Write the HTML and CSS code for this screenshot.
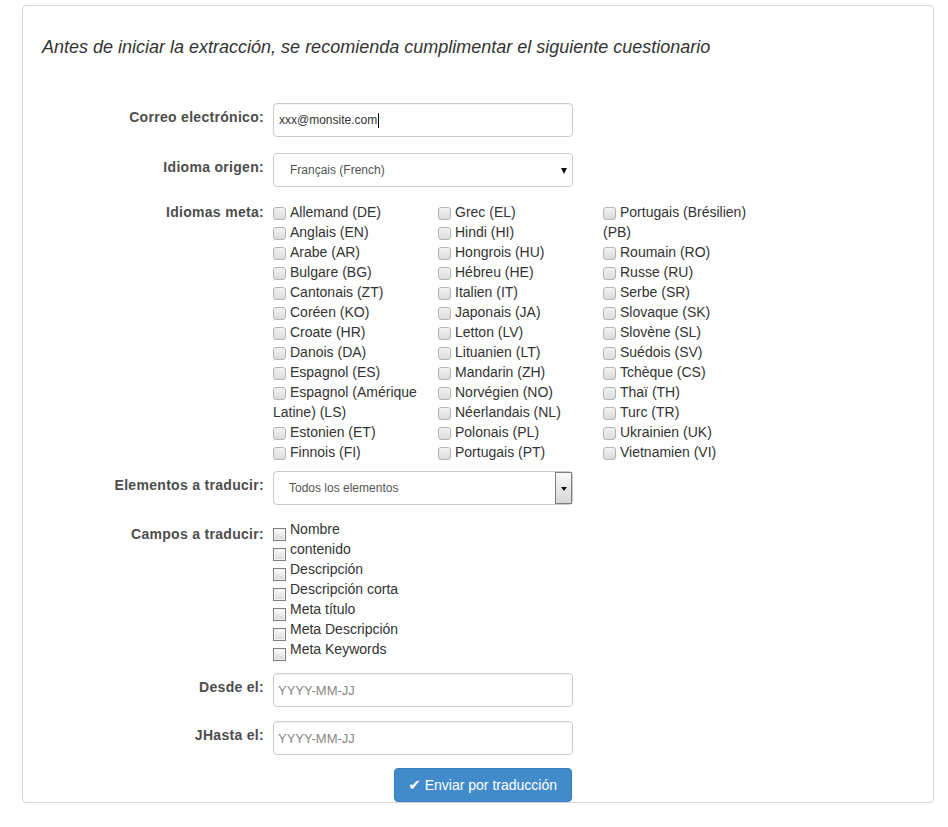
FILE: index.html
```html
<!DOCTYPE html>
<html lang="es">
<head>
<meta charset="utf-8">
<title>Cuestionario</title>
<link rel="stylesheet" href="styles.css">
</head>
<body>
<div class="panel">
  <h4 class="intro">Antes de iniciar la extracción, se recomienda cumplimentar el siguiente cuestionario</h4>
  <form class="form">
    <div class="row row-email">
      <label class="lbl">Correo electrónico:</label>
      <div class="ctrl">
        <div class="field field-text"><span class="val">xxx@monsite.com</span><span class="caret"></span></div>
      </div>
    </div>

    <div class="row row-origin">
      <label class="lbl">Idioma origen:</label>
      <div class="ctrl">
        <div class="field field-select"><span class="sel-val">Français (French)</span><span class="arrow"></span></div>
      </div>
    </div>

    <div class="row row-langs">
      <label class="lbl lbl-flat">Idiomas meta:</label>
      <div class="ctrl langs">
        <div class="lang-col">
          <div class="lang"><input type="checkbox" class="cb-round">Allemand (DE)</div>
          <div class="lang"><input type="checkbox" class="cb-round">Anglais (EN)</div>
          <div class="lang"><input type="checkbox" class="cb-round">Arabe (AR)</div>
          <div class="lang"><input type="checkbox" class="cb-round">Bulgare (BG)</div>
          <div class="lang"><input type="checkbox" class="cb-round">Cantonais (ZT)</div>
          <div class="lang"><input type="checkbox" class="cb-round">Coréen (KO)</div>
          <div class="lang"><input type="checkbox" class="cb-round">Croate (HR)</div>
          <div class="lang"><input type="checkbox" class="cb-round">Danois (DA)</div>
          <div class="lang"><input type="checkbox" class="cb-round">Espagnol (ES)</div>
          <div class="lang"><input type="checkbox" class="cb-round">Espagnol (Amérique Latine) (LS)</div>
          <div class="lang"><input type="checkbox" class="cb-round">Estonien (ET)</div>
          <div class="lang"><input type="checkbox" class="cb-round">Finnois (FI)</div>
        </div>
        <div class="lang-col">
          <div class="lang"><input type="checkbox" class="cb-round">Grec (EL)</div>
          <div class="lang"><input type="checkbox" class="cb-round">Hindi (HI)</div>
          <div class="lang"><input type="checkbox" class="cb-round">Hongrois (HU)</div>
          <div class="lang"><input type="checkbox" class="cb-round">Hébreu (HE)</div>
          <div class="lang"><input type="checkbox" class="cb-round">Italien (IT)</div>
          <div class="lang"><input type="checkbox" class="cb-round">Japonais (JA)</div>
          <div class="lang"><input type="checkbox" class="cb-round">Letton (LV)</div>
          <div class="lang"><input type="checkbox" class="cb-round">Lituanien (LT)</div>
          <div class="lang"><input type="checkbox" class="cb-round">Mandarin (ZH)</div>
          <div class="lang"><input type="checkbox" class="cb-round">Norvégien (NO)</div>
          <div class="lang"><input type="checkbox" class="cb-round">Néerlandais (NL)</div>
          <div class="lang"><input type="checkbox" class="cb-round">Polonais (PL)</div>
          <div class="lang"><input type="checkbox" class="cb-round">Portugais (PT)</div>
        </div>
        <div class="lang-col">
          <div class="lang"><input type="checkbox" class="cb-round">Portugais (Brésilien) (PB)</div>
          <div class="lang"><input type="checkbox" class="cb-round">Roumain (RO)</div>
          <div class="lang"><input type="checkbox" class="cb-round">Russe (RU)</div>
          <div class="lang"><input type="checkbox" class="cb-round">Serbe (SR)</div>
          <div class="lang"><input type="checkbox" class="cb-round">Slovaque (SK)</div>
          <div class="lang"><input type="checkbox" class="cb-round">Slovène (SL)</div>
          <div class="lang"><input type="checkbox" class="cb-round">Suédois (SV)</div>
          <div class="lang"><input type="checkbox" class="cb-round">Tchèque (CS)</div>
          <div class="lang"><input type="checkbox" class="cb-round">Thaï (TH)</div>
          <div class="lang"><input type="checkbox" class="cb-round">Turc (TR)</div>
          <div class="lang"><input type="checkbox" class="cb-round">Ukrainien (UK)</div>
          <div class="lang"><input type="checkbox" class="cb-round">Vietnamien (VI)</div>
        </div>
      </div>
    </div>

    <div class="row row-elements">
      <label class="lbl">Elementos a traducir:</label>
      <div class="ctrl">
        <div class="field field-combo"><span class="combo-val">Todos los elementos</span><span class="combo-btn"><span class="arrow arrow-sm"></span></span></div>
      </div>
    </div>

    <div class="row row-fields">
      <label class="lbl lbl-fields">Campos a traducir:</label>
      <div class="ctrl fields">
        <div class="fld"><input type="checkbox" class="cb-sq"><span>Nombre</span></div>
        <div class="fld"><input type="checkbox" class="cb-sq"><span>contenido</span></div>
        <div class="fld"><input type="checkbox" class="cb-sq"><span>Descripción</span></div>
        <div class="fld"><input type="checkbox" class="cb-sq"><span>Descripción corta</span></div>
        <div class="fld"><input type="checkbox" class="cb-sq"><span>Meta título</span></div>
        <div class="fld"><input type="checkbox" class="cb-sq"><span>Meta Descripción</span></div>
        <div class="fld"><input type="checkbox" class="cb-sq"><span>Meta Keywords</span></div>
      </div>
    </div>

    <div class="row row-date">
      <label class="lbl">Desde el:</label>
      <div class="ctrl"><input type="text" class="date" placeholder="YYYY-MM-JJ"></div>
    </div>

    <div class="row row-date">
      <label class="lbl">JHasta el:</label>
      <div class="ctrl"><input type="text" class="date" placeholder="YYYY-MM-JJ"></div>
    </div>

    <div class="row row-submit">
      <div class="lbl"></div>
      <div class="ctrl ctrl-end">
        <button type="button" class="btn"><span class="check">✔</span> Enviar por traducción</button>
      </div>
    </div>
  </form>
</div>
</body>
</html>
```
FILE: styles.css
```css
* { box-sizing: border-box; }

body {
  margin: 0;
  background: #fff;
  font-family: "Liberation Sans", Arial, sans-serif;
  font-size: 14px;
  color: #333;
}

.panel {
  margin: 5px 0 0 22px;
  width: 912px;
  border: 1px solid #d6d6d6;
  border-radius: 4px;
  padding: 0 0 0 19px;
}

.intro {
  margin: 31px 0 0;
  font-size: 18px;
  font-style: italic;
  font-weight: normal;
  line-height: 20px;
  color: #333;
}

.form {
  margin: 46px 0 0 58px;
  display: flex;
  flex-direction: column;
}

.row {
  display: flex;
  align-items: flex-start;
}

.row-origin { margin-top: 16px; }
.row-langs { margin-top: 15px; }
.row-elements { margin-top: 9px; }
.row-fields { margin-top: 14px; }
.row-date { margin-top: 14px; }
.row-submit { margin-top: 13px; }

.lbl {
  width: 164px;
  margin-right: 9px;
  text-align: right;
  font-weight: bold;
  letter-spacing: 0.3px;
  line-height: 20px;
  padding-top: 4px;
  color: #4d4d4d;
  flex: none;
}

.lbl-flat { padding-top: 0; }
.lbl-fields { padding-top: 5px; }

.ctrl {
  width: 300px;
}

.ctrl-end {
  display: flex;
  justify-content: flex-end;
  padding-right: 1px;
}

.field {
  height: 34px;
  border: 1px solid #ccc;
  border-radius: 4px;
  background: #fff;
  display: flex;
  align-items: center;
  font-size: 12px;
}

.field-text {
  padding-left: 5px;
  box-shadow: inset 0 1px 1px rgba(0,0,0,0.05);
}

.val { color: #333; }

.caret {
  display: inline-block;
  width: 1px;
  height: 15px;
  background: #000;
  margin-left: 1px;
}

.field-select {
  justify-content: space-between;
  padding: 0 5px 0 16px;
  color: #555;
}

.arrow {
  width: 0;
  height: 0;
  border-left: 3.5px solid transparent;
  border-right: 3.5px solid transparent;
  border-top: 6px solid #111;
  margin-top: 2px;
}

.field-combo {
  padding-left: 15px;
  color: #555;
  align-items: stretch;
}

.combo-val {
  flex: 1;
  display: flex;
  align-items: center;
}

.combo-btn {
  width: 17px;
  border: 1px solid #7f7f7f;
  background: linear-gradient(#fbfbfb, #d6d6d6);
  display: flex;
  align-items: center;
  justify-content: center;
}

.arrow-sm {
  border-left-width: 3.5px;
  border-right-width: 3.5px;
  border-top-width: 4px;
  margin-top: 1px;
}

.langs {
  display: grid;
  grid-template-columns: repeat(3, 165px);
  width: 495px;
  line-height: 20px;
  font-size: 14px;
  color: #333;
}

.cb-round {
  -webkit-appearance: none;
  appearance: none;
  display: inline-block;
  width: 13px;
  height: 13px;
  margin: 0 4px 0 0;
  border: 1px solid #b4b4b4;
  border-radius: 3px;
  background: linear-gradient(#f3f3f3, #dcdcdc);
  vertical-align: -3px;
}

.fields {
  line-height: 20px;
  font-size: 14px;
  color: #333;
}

.fld {
  display: flex;
  align-items: flex-start;
  height: 20px;
}

.cb-sq {
  -webkit-appearance: none;
  appearance: none;
  flex: none;
  width: 13px;
  height: 13px;
  margin: 9px 4px 0 0;
  border: 1px solid #7c7c7c;
  border-radius: 0;
  background: linear-gradient(#ffffff, #d6d6d6);
  box-shadow: inset 0 0 0 1px #f4f4f4;
}

.date {
  display: block;
  width: 300px;
  height: 34px;
  border: 1px solid #ccc;
  border-radius: 4px;
  padding: 0 4px;
  font-family: "Liberation Sans", Arial, sans-serif;
  font-size: 13px;
  color: #333;
  box-shadow: inset 0 1px 1px rgba(0,0,0,0.05);
  outline: none;
}

.date::placeholder { color: #888; }

.btn {
  height: 34px;
  padding: 0 14px 0 13px;
  border: 1px solid #357ebd;
  border-radius: 4px;
  background: #428bca;
  color: #fff;
  font-family: "Liberation Sans", Arial, sans-serif;
  font-size: 14px;
  line-height: 20px;
}

.check {
  font-family: "DejaVu Sans", sans-serif;
  font-size: 15px;
}
```
